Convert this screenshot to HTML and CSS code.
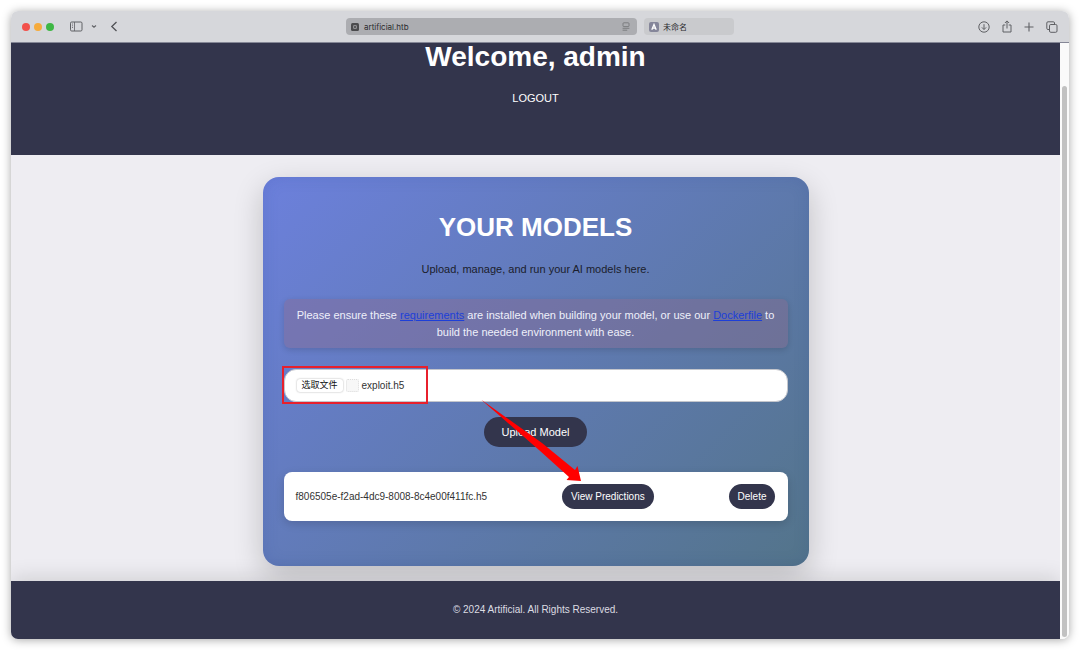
FILE: index.html
```html
<!DOCTYPE html>
<html lang="en">
<head>
    <meta charset="UTF-8">
    <meta name="viewport" content="width=device-width, initial-scale=1.0">
    <title>Artificial - Dashboard</title>
    <link rel="stylesheet" href="styles.css">
</head>
<body>
    <div class="window">
        <div class="toolbar">
            <div class="tools">
                <span class="light red"></span>
                <span class="light yellow"></span>
                <span class="light green"></span>
                <button type="button" class="tool sidebar-btn" aria-label="Sidebar">
                    <svg width="13" height="11" viewBox="0 0 13 11" fill="none" stroke="#5f6064"><rect x="0.5" y="1" width="11.5" height="9" rx="1.2"/><path d="M4.5 1v9M2 3h1M2 4.8h1M2 6.5h1" stroke-width="0.8"/></svg>
                </button>
                <button type="button" class="tool menu-btn" aria-label="Tab groups">
                    <svg width="6" height="5" viewBox="0 0 6 5" fill="none" stroke="#66676b" stroke-width="1.2"><path d="M1 1.5l2 1.8 2-1.8"/></svg>
                </button>
                <button type="button" class="tool" aria-label="Back">
                    <svg width="8" height="11" viewBox="0 0 8 11" fill="none" stroke="#505155" stroke-width="1.3"><path d="M6.5 1L1.8 5.5l4.7 4.5"/></svg>
                </button>
            </div>
            <div class="tabs">
                <button type="button" class="tab active">
                    <svg width="8" height="8" viewBox="0 0 8 8"><rect width="8" height="8" rx="1.5" fill="#4b4b4d"/><rect x="2" y="2" width="4" height="4" fill="#8f8f92"/><path d="M2.5 2.5l3 3M5.5 2.5l-3 3" stroke="#4b4b4d" stroke-width="0.8"/></svg>
                    <span>artificial.htb</span>
                    <svg class="reader" width="8" height="9" viewBox="0 0 8 9" fill="none" stroke="#77787b" stroke-width="0.9"><rect x="1" y="0.8" width="6" height="3.8" rx="0.8"/><path d="M0.6 6.3h6.8M0.6 8.2h4.6"/></svg>
                </button>
                <button type="button" class="tab">
                    <svg width="10" height="10" viewBox="0 0 10 10"><rect width="10" height="10" rx="2" fill="#85869a"/><path d="M2.8 7.8L5 2.5l2.2 5.3M3.7 6.2h2.6" fill="none" stroke="#fff" stroke-width="1.3"/></svg>
                    <span>未命名</span>
                </button>
            </div>
            <div class="tools right">
                <button type="button" class="tool" aria-label="Downloads">
                    <svg width="12" height="12" viewBox="0 0 12 12" fill="none" stroke="#5f6064"><circle cx="6" cy="6" r="5.2"/><path d="M6 3.2v5.2M3.9 6.4L6 8.5l2.1-2.1"/></svg>
                </button>
                <button type="button" class="tool" aria-label="Share">
                    <svg width="10" height="13" viewBox="0 0 10 13" fill="none" stroke="#5f6064"><path d="M3.3 5H1v7h8V5H6.7M5 8.5V1M2.9 3L5 0.9 7.1 3"/></svg>
                </button>
                <button type="button" class="tool" aria-label="New tab">
                    <svg width="10" height="10" viewBox="0 0 10 10" fill="none" stroke="#5f6064" stroke-width="1.1"><path d="M5 0.5v9M0.5 5h9"/></svg>
                </button>
                <button type="button" class="tool" aria-label="Tab overview">
                    <svg width="12" height="12" viewBox="0 0 12 12" fill="none" stroke="#5f6064"><rect x="3.5" y="3.5" width="7.5" height="7.8" rx="1.3"/><path d="M3.5 8.5H2A1.2 1.2 0 0 1 .8 7.3V2A1.2 1.2 0 0 1 2 .8h5.3A1.2 1.2 0 0 1 8.5 2v1.5"/></svg>
                </button>
            </div>
        </div>

        <div class="viewport">
            <div class="page">
                <header class="header">
                    <h1>Welcome, admin</h1>
                    <nav><a href="#">LOGOUT</a></nav>
                </header>

                <main class="main">
                    <section class="card">
                        <h2>YOUR MODELS</h2>
                        <p class="intro">Upload, manage, and run your AI models here.</p>
                        <div class="notice">
                            Please ensure these <a href="#">requirements</a> are installed when building your model, or use our <a href="#">Dockerfile</a> to build the needed environment with ease.
                        </div>
                        <form class="upload">
                            <label class="file-box" for="model_file">
                                <input type="file" id="model_file" class="file-input" accept=".h5">
                                <span class="file-btn">选取文件</span>
                                <span class="file-icon"></span>
                                <span>exploit.h5</span>
                                <span class="highlight"></span>
                            </label>
                            <button type="button" class="btn upload-btn">Upload Model</button>
                        </form>
                        <ul class="models">
                            <li class="model">
                                <span>f806505e-f2ad-4dc9-8008-8c4e00f411fc.h5</span>
                                <button type="button" class="btn small-btn">View Predictions
                                    <svg class="arrow" width="100" height="82" viewBox="0 0 100 82"><path d="M-1 -0.5L60 43 93 70 95.5 66 99 81 84.5 80 87 77 57 50z" fill="#ff0000"/></svg>
                                </button>
                                <button type="button" class="btn small-btn">Delete</button>
                            </li>
                        </ul>
                    </section>
                </main>

                <footer class="footer">© 2024 Artificial. All Rights Reserved.</footer>
            </div>
            <div class="scrollbar"><div class="thumb"></div></div>
        </div>
    </div>
</body>
</html>
```

FILE: styles.css
```css
* {
    box-sizing: border-box;
}
body {
    margin: 0;
    padding: 11px;
    height: 100vh;
    background-color: #fff;
    font-family: "Liberation Sans", "Noto Sans CJK SC", Arial, sans-serif;
    font-size: 11px;
    color: #1b1d2c;
}
button {
    font-family: inherit;
    border: none;
    cursor: pointer;
}
svg {
    display: block;
}
.window {
    display: flex;
    flex-direction: column;
    height: 100%;
    border-radius: 7px;
    overflow: hidden;
    box-shadow: 0 1px 10px rgba(0, 0, 0, 0.35);
}

/* Browser toolbar */
.toolbar {
    display: grid;
    grid-template-columns: 1fr auto 1fr;
    align-items: center;
    flex: none;
    height: 32px;
    padding: 0 11px;
    background-color: #d6d7db;
    border-bottom: 1px solid #858796;
}
.tools {
    display: flex;
    align-items: center;
    gap: 4px;
}
.tools.right {
    justify-content: flex-end;
    gap: 12px;
}
.light {
    width: 8px;
    height: 8px;
    border-radius: 50%;
}
.red {
    background-color: #f2504b;
}
.yellow {
    background-color: #f6ab3c;
}
.green {
    background-color: #3eb744;
}
.tool {
    padding: 0;
    background: none;
}
.sidebar-btn {
    margin-left: 12px;
}
.menu-btn {
    margin: 0 9px 0 4px;
}
.tabs {
    display: flex;
    gap: 7px;
}
.tab {
    display: flex;
    align-items: center;
    gap: 4px;
    width: 90px;
    height: 17px;
    padding: 0 5px;
    border-radius: 4px;
    background-color: #c9cacd;
    font-family: Inter, "Noto Sans CJK SC", sans-serif;
    font-size: 8px;
    color: #2b2b2e;
}
.tab.active {
    gap: 5px;
    width: 291px;
    background-color: #acadb1;
}
.tab .reader {
    margin: 0 2px 0 auto;
}

/* Page */
.viewport {
    display: flex;
    flex: 1;
    min-height: 0;
}
.page {
    display: flex;
    flex-direction: column;
    flex: 1;
    background-color: #eeedf2;
}
.scrollbar {
    width: 9px;
    padding: 43px 2px 2px;
    background-color: #fafafa;
}
.thumb {
    width: 5px;
    height: 100%;
    border-radius: 3px;
    background-color: #c1c1c1;
}
.header {
    height: 112px;
    flex: none;
    background-color: #33354c;
    color: #fff;
    text-align: center;
}
.header h1 {
    margin: 0 0 19px;
    font-size: 28px;
    line-height: 28px;
}
.header a {
    color: #fff;
    line-height: 16px;
    text-decoration: none;
}
.main {
    flex: 1;
    padding: 22px 20px 15px;
}
.card {
    width: 100%;
    max-width: 546px;
    margin: 0 auto;
    padding: 32px 21px 45px;
    border-radius: 16px;
    background: linear-gradient(135deg, #6c80dc, #53748a);
    box-shadow: 0 10px 30px rgba(0, 0, 0, 0.2), inset 0 0 16px rgba(40, 70, 150, 0.15);
    text-align: center;
}
.card h2 {
    margin: 0 0 16px;
    font-size: 26px;
    line-height: 36px;
    color: #fff;
}
.intro {
    margin: 0 0 21px;
    line-height: 17px;
}
.notice {
    padding: 8px 12px 7px;
    border-radius: 6px;
    background-color: rgba(140, 105, 140, 0.4);
    box-shadow: 0 2px 6px rgba(0, 0, 0, 0.15);
    line-height: 17px;
    color: #eef0fa;
}
.notice a {
    color: #1d3fd8;
}
.upload {
    display: flex;
    flex-direction: column;
    align-items: center;
    gap: 15px;
    margin: 21px 0 25px;
}
.file-box {
    position: relative;
    display: flex;
    align-items: center;
    width: 100%;
    height: 33px;
    padding: 0 12px;
    border: 1px solid #c4c6cc;
    border-radius: 12px;
    background-color: #fff;
    font-size: 10px;
    color: #333;
}
.file-input {
    position: absolute;
    width: 1px;
    height: 1px;
    opacity: 0;
}
.file-btn {
    padding: 0 5px;
    border-radius: 3px;
    box-shadow: 0 0 2px rgba(0, 0, 0, 0.35);
    font-size: 9px;
    line-height: 13px;
    color: #111;
}
.file-icon {
    width: 13px;
    height: 13px;
    margin: 0 3px;
    border: 1px dotted #ddd;
    border-radius: 2px;
    background-color: #f7f7f7;
}
.btn {
    background-color: #33354c;
    color: #fff;
}
.upload-btn {
    height: 30px;
    padding: 0 18px;
    border-radius: 15px;
    font-size: 11px;
}
.models {
    margin: 0;
    padding: 0;
    list-style: none;
}
.model {
    display: flex;
    justify-content: space-between;
    align-items: center;
    padding: 12px;
    border-radius: 8px;
    background-color: #fff;
    box-shadow: 0 3px 10px rgba(0, 0, 0, 0.15);
    font-size: 10px;
    color: #333;
}
.small-btn {
    position: relative;
    height: 25px;
    padding: 0 9px;
    border-radius: 13px;
    font-size: 10px;
}
.footer {
    height: 58px;
    flex: none;
    background-color: #33354c;
    box-shadow: 0 -4px 20px rgba(0, 0, 0, 0.12);
    font-size: 10px;
    line-height: 58px;
    color: #dcdce2;
    text-align: center;
}

/* Callouts */
.highlight {
    position: absolute;
    top: -4px;
    left: -3px;
    width: 146px;
    height: 38px;
    border: 2px solid #e8202c;
}
.arrow {
    position: absolute;
    right: 72px;
    bottom: 27px;
    overflow: visible;
    pointer-events: none;
}
```
